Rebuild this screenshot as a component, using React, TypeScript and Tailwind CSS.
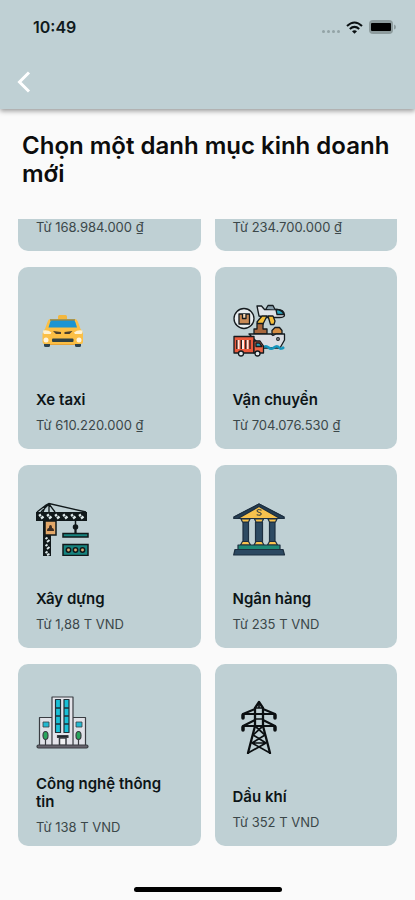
import React from 'react';

interface Category {
  id: string;
  name?: string;
  price: string;
  icon?: React.ReactNode;
}

function TaxiIcon() {
  return (
    <svg viewBox="0 0 54 54" className="w-[54px] h-[54px]" aria-hidden="true">
      <rect x="22" y="12" width="9" height="5" rx="1.5" fill="#f3b73e" />
      <rect x="8" y="38" width="6" height="6" rx="1.5" fill="#2d4350" />
      <rect x="39" y="38" width="6" height="6" rx="1.5" fill="#2d4350" />
      <path d="M14 16h25q2 0 3 3l2.500 7q2.500 2 2.500 5v8q0 2-2 2H8.500q-2 0-2-2v-8q0-3 2.500-5l2.500-7q1-3 2.500-3z" fill="#fbbf45" />
      <path d="M15.500 17.500h22q1.500 0 2 2l1.500 5H12.500l1.500-5q.5-2 1.500-2z" fill="#1b94d2" />
      <path d="M14 17h25" stroke="#4b6a62" strokeWidth="1" />
      <path d="M7 27.500q5-1 8.500 2l-1 1.500H8q-1-1-1-3.500zM46.500 27.500q-5-1-8.500 2l1 1.500h6.500q1-1 1-3.500z" fill="#fff1cf" />
      <path d="M17 28l8 1v2h-5zM36.500 28l-8 1v2h5z" fill="#4a402d" />
      <circle cx="10" cy="37" r="2.500" fill="#fff4dc" />
      <circle cx="43" cy="37" r="2.500" fill="#fff4dc" />
      <rect x="16" y="35.500" width="21.500" height="3.500" rx="1" fill="#2e4145" />
      <path d="M14 41.500h25" stroke="#e7a43a" strokeWidth="1" />
    </svg>
  );
}

function ShippingIcon() {
  return (
    <svg viewBox="0 0 54 54" className="w-[54px] h-[54px]" stroke="#151b1f" strokeWidth="1.3" strokeLinejoin="round" aria-hidden="true">
      <circle cx="11" cy="15.500" r="10" fill="#e9eef0" />
      <path d="M6 11h10.500v10H6z" fill="#c98a55" />
      <path d="M9.500 11v4.500h3.500V11" fill="#f5d8b4" />
      <path d="M26 13l-2-10h4.500l3 3.500H44q7 0 7.500 5.500 0 2.500-5 2.500H33z" fill="#dfe3e8" />
      <path d="M43 6.500q6 0 8 5H44z" fill="#2aa8c4" />
      <path d="M33 6l2-3.500h5l2 4" fill="#8aa0ad" />
      <path d="M24 19l5-6h5l-4.500 9H25zM35 13h5l2 5-1 3.500h-3.500z" fill="#f6bf3a" />
      <path d="M21 31v-5h3v-5.500h6V26h4v5z" fill="#a8663c" />
      <path d="M39 31v-3.500l3-3h4.500l2.500 3V31z" fill="#d38c43" />
      <path d="M16 31h22l2 1.500 3-1.500h8.500v6L47 45H30z" fill="#dadde2" />
      <circle cx="45" cy="36" r="1.300" fill="#fff" />
      <path d="M30 44.500q3-2.500 5.500 0t5.500 0 5 0 5-.5" fill="none" stroke="#1596bd" strokeWidth="2.500" />
      <path d="M1 33.500h20V50H1z" fill="#ec5a3c" />
      <path d="M5.500 37v9M10 37v9M14.500 37v9" strokeWidth="2" stroke="#ffe9df" />
      <path d="M3.800 37v9M8.300 37v9M12.800 37v9M17 37v9" strokeWidth="1.200" />
      <path d="M21 38h6l3.500 5v7H21z" fill="#ef6847" />
      <path d="M23 40h3.500l2.500 3.500h-6z" fill="#27a5bd" />
      <circle cx="8" cy="50.500" r="2.500" fill="#e3e7ea" />
      <circle cx="24.500" cy="50.500" r="2.500" fill="#e3e7ea" />
    </svg>
  );
}

function CraneIcon() {
  return (
    <svg viewBox="0 0 54 54" className="w-[54px] h-[54px]" fill="none" stroke="#10181a" strokeWidth="1.500" aria-hidden="true">
      <path d="M1 10L10 3l3-1.500L50 10M10 3L7 10M13 2v8M13 2l6 8M5 10l8-8" strokeWidth="1.300" />
      <rect x="0" y="10" width="51" height="9" fill="#10181a" stroke="none" />
      <path
        d="M3 14l2-1.500M5 16.500l2.500-2M11 14l2-1.500M13 16.500l2.500-2M19 14l2-1.500M21 16.500l2.500-2M27 14l2-1.500M29 16.500l2.500-2M35 14l2-1.500M37 16.500l2.500-2M43 14l2-1.500M45 16.500l2.500-2"
        stroke="#dce8e9"
        strokeWidth="2.300"
      />
      <rect x="7" y="19" width="8" height="35" fill="#10181a" stroke="none" />
      <path d="M9.500 37l2-1.500M11 40l2.500-2M9.500 44l2-1.500M11 47l2.500-2M9.500 51l2-1.500M11 53l2.500-1" stroke="#dce8e9" strokeWidth="2" />
      <rect x="9" y="19" width="11" height="14" fill="#e3a869" />
      <path d="M11 29q0-3 2-3 0-3 1.500-3t1.500 3q2 0 2 3z" fill="#3c2d23" stroke="none" />
      <path d="M39.500 19v12" />
      <circle cx="39.500" cy="25" r="2" fill="#10181a" />
      <path d="M39.500 27v4" strokeWidth="2" />
      <rect x="27" y="31.500" width="25" height="3.500" fill="#16847f" />
      <rect x="27" y="42.500" width="25" height="11" fill="#16847f" />
      <g fill="#d6ad75">
        <circle cx="32.500" cy="48" r="2.200" />
        <circle cx="39.500" cy="48" r="2.200" />
        <circle cx="46.500" cy="48" r="2.200" />
      </g>
    </svg>
  );
}

function BankIcon() {
  return (
    <svg viewBox="0 0 54 54" className="w-[54px] h-[54px]" stroke="#1d2f40" strokeWidth="1.200" strokeLinejoin="round" aria-hidden="true">
      <path d="M26 2L1 15v1.500h50V15z" fill="#f9c24d" />
      <path d="M26 2L1 15v1.500h4L26 4.500l21 12h4V15z" fill="#263f54" />
      <path d="M28.500 8.200q-4.500-1.500-4.500.8 0 1 2.300 1.400 2.200.5 2 1.700-.3 1.800-4.600.7" fill="none" strokeWidth="1" />
      <g fill="#2d4a62">
        <rect x="10" y="20" width="5.500" height="20" />
        <rect x="22.500" y="20" width="7" height="20" />
        <rect x="36.500" y="20" width="5.500" height="20" />
      </g>
      <path d="M8 17h9l-1.500 3h-6zM21.500 17h9l-1.500 3h-6zM35 17h9l-1.500 3h-6z" fill="#f9c24d" />
      <path d="M9.500 39.500h6l2 3.500h-10zM23 39.500h6l2 3.500H21zM36.500 39.500h6l2 3.500h-10z" fill="#f9c24d" />
      <path d="M5 43h42v4.500H5z" fill="#1d8a77" />
      <path d="M2 47.500h48l1.500 5.500H.700z" fill="#2b4861" />
    </svg>
  );
}

function OfficeIcon() {
  return (
    <svg viewBox="0 0 54 54" className="w-[54px] h-[54px]" stroke="#3a3d42" strokeWidth="1.200" strokeLinejoin="round" aria-hidden="true">
      <rect x="3.500" y="21.500" width="13" height="28" fill="#dfe1e7" />
      <rect x="36.500" y="21.500" width="13" height="28" fill="#dfe1e7" />
      <rect x="16" y="1" width="21" height="48.500" fill="#e4e4ea" />
      <g fill="#18c0d6" stroke="#1f3038">
        <rect x="19.500" y="3.500" width="5" height="33" />
        <rect x="28" y="3.500" width="5" height="33" />
      </g>
      <path d="M19.500 12h5M19.500 20h5M19.500 28h5M28 12h5M28 20h5M28 28h5" stroke="#1f3038" strokeWidth="1.300" />
      <path d="M7 26h6v5H7zM40 26h6v5h-6z" fill="#23b9d0" strokeWidth=".8" />
      <path d="M9.500 40v9M42.500 40v9" />
      <ellipse cx="9.500" cy="39.500" rx="2.500" ry="4" fill="#28a55b" />
      <ellipse cx="42.500" cy="39.500" rx="2.500" ry="4" fill="#28a55b" />
      <path d="M21.500 39.500h10.500v2H21.500z" fill="#24272b" />
      <path d="M23.500 42h6.500v7.500h-6.500z" fill="#f0f0f2" strokeWidth="1.500" />
      <rect x="1" y="49" width="51" height="3" rx="1.500" fill="#66636c" />
    </svg>
  );
}

function PylonIcon() {
  return (
    <svg viewBox="0 0 54 54" className="w-[54px] h-[54px]" fill="none" stroke="#0b0f11" strokeWidth="1.700" strokeLinejoin="round" strokeLinecap="round" aria-hidden="true">
      <path d="M22 8l4-6 4 6v18l7 27M22 8v18l-7 27" strokeWidth="2.300" />
      <path d="M22 8h8M22 14h8M22 19h8M22 26h8M26 2v5" />
      <path d="M22 9L10 14v4M30 9l12 5v4M10 14h32" strokeWidth="2" />
      <path d="M22 20L10 26v4M30 20l12 6v4M10 26h32" strokeWidth="2" />
      <path d="M10 15v3M42 15v3M10 27v3M42 27v3" strokeWidth="3.500" />
      <path d="M22 26l10 9-13 8M30 26l-10 9 13 8M19 43h14M19 43l18 10M33 43L15 53" />
    </svg>
  );
}

const categories: Category[] = [
  { id: 'first', price: 'Từ 168.984.000 ₫' },
  { id: 'second', price: 'Từ 234.700.000 ₫' },
  { id: 'taxi', name: 'Xe taxi', price: 'Từ 610.220.000 ₫', icon: <TaxiIcon /> },
  { id: 'shipping', name: 'Vận chuyển', price: 'Từ 704.076.530 ₫', icon: <ShippingIcon /> },
  { id: 'construction', name: 'Xây dựng', price: 'Từ 1,88 T VND', icon: <CraneIcon /> },
  { id: 'bank', name: 'Ngân hàng', price: 'Từ 235 T VND', icon: <BankIcon /> },
  { id: 'it', name: 'Công nghệ thông tin', price: 'Từ 138 T VND', icon: <OfficeIcon /> },
  { id: 'oil', name: 'Dầu khí', price: 'Từ 352 T VND', icon: <PylonIcon /> },
];

function StatusBar() {
  return (
    <div className="flex items-center justify-between h-[54px] pl-[33px] pr-[19px]">
      <span className="text-base font-semibold text-[#101a1c]">10:49</span>
      <div className="flex items-center gap-[6px]">
        <div className="flex gap-[2px] pt-2">
          <span className="w-[3px] h-[3px] rounded-full bg-[#93a3a6]" />
          <span className="w-[3px] h-[3px] rounded-full bg-[#93a3a6]" />
          <span className="w-[3px] h-[3px] rounded-full bg-[#93a3a6]" />
          <span className="w-[3px] h-[3px] rounded-full bg-[#93a3a6]" />
        </div>
        <svg viewBox="0 0 17 13" className="w-[17px] h-[13px]" fill="none" stroke="#0a1012" strokeWidth="2" aria-hidden="true">
          <path d="M1 5q7.500-7 15 0M3.800 8q4.700-4.300 9.400 0" />
          <path d="M8.500 12.800L6 10.200q2.500-2 5 0z" fill="#0a1012" stroke="none" />
        </svg>
        <svg viewBox="0 0 27 14" className="w-[27px] h-[14px]" aria-hidden="true">
          <rect x="0" y="0" width="24" height="14" rx="4" fill="#8d9b9d" />
          <rect x="2" y="3" width="20" height="8" rx="1" fill="#000" />
          <path d="M25 4.500q2 .5 2 2.500t-2 2.500z" fill="#8d9b9d" />
        </svg>
      </div>
    </div>
  );
}

function CategoryCard({ category }: { category: Category }) {
  return (
    <button className="aspect-square flex flex-col justify-around items-start pt-[21px] px-[18px] rounded-[10px] bg-[#bfd0d4] text-left">
      <div className="h-14">{category.icon}</div>
      <div>
        <div className="min-h-[18px] text-[15px] leading-[18px] font-semibold text-[#0d1517]">{category.name}</div>
        <div className="mt-2 text-[13px] leading-4 text-[#3b4749]">{category.price}</div>
      </div>
    </button>
  );
}

export default function App() {
  return (
    <div className="h-screen flex flex-col bg-[#fafafa] font-['Inter','Noto_Sans',sans-serif]">
      <header className="shrink-0 bg-[#bfd0d4] shadow-[0_2px_5px_rgba(0,0,0,0.4)]">
        <StatusBar />
        <div className="h-[55px] flex items-center pl-3">
          <button aria-label="Quay lại" className="w-6 h-6">
            <svg viewBox="0 0 24 24" className="w-6 h-6" fill="none" stroke="#fff" strokeWidth="3" aria-hidden="true">
              <path d="M17 2.500L7.500 12l9.500 9.500" />
            </svg>
          </button>
        </div>
      </header>

      <h1 className="shrink-0 px-[22px] pt-[23px] pb-[31px] text-2xl leading-7 font-semibold text-[#0c0c0c]">
        Chọn một danh mục kinh doanh mới
      </h1>

      {/* reversed column keeps the list scrolled to its end */}
      <main className="flex-1 min-h-0 flex flex-col-reverse overflow-y-auto [scrollbar-width:none]">
        <div className="grid grid-cols-2 gap-x-[14px] gap-y-4 px-[18px]">
          {categories.map((category) => (
            <CategoryCard key={category.id} category={category} />
          ))}
        </div>
      </main>

      <footer className="shrink-0 h-[54px] flex justify-center items-end pb-2">
        <div className="w-[148px] h-[5px] rounded-full bg-black" />
      </footer>
    </div>
  );
}
